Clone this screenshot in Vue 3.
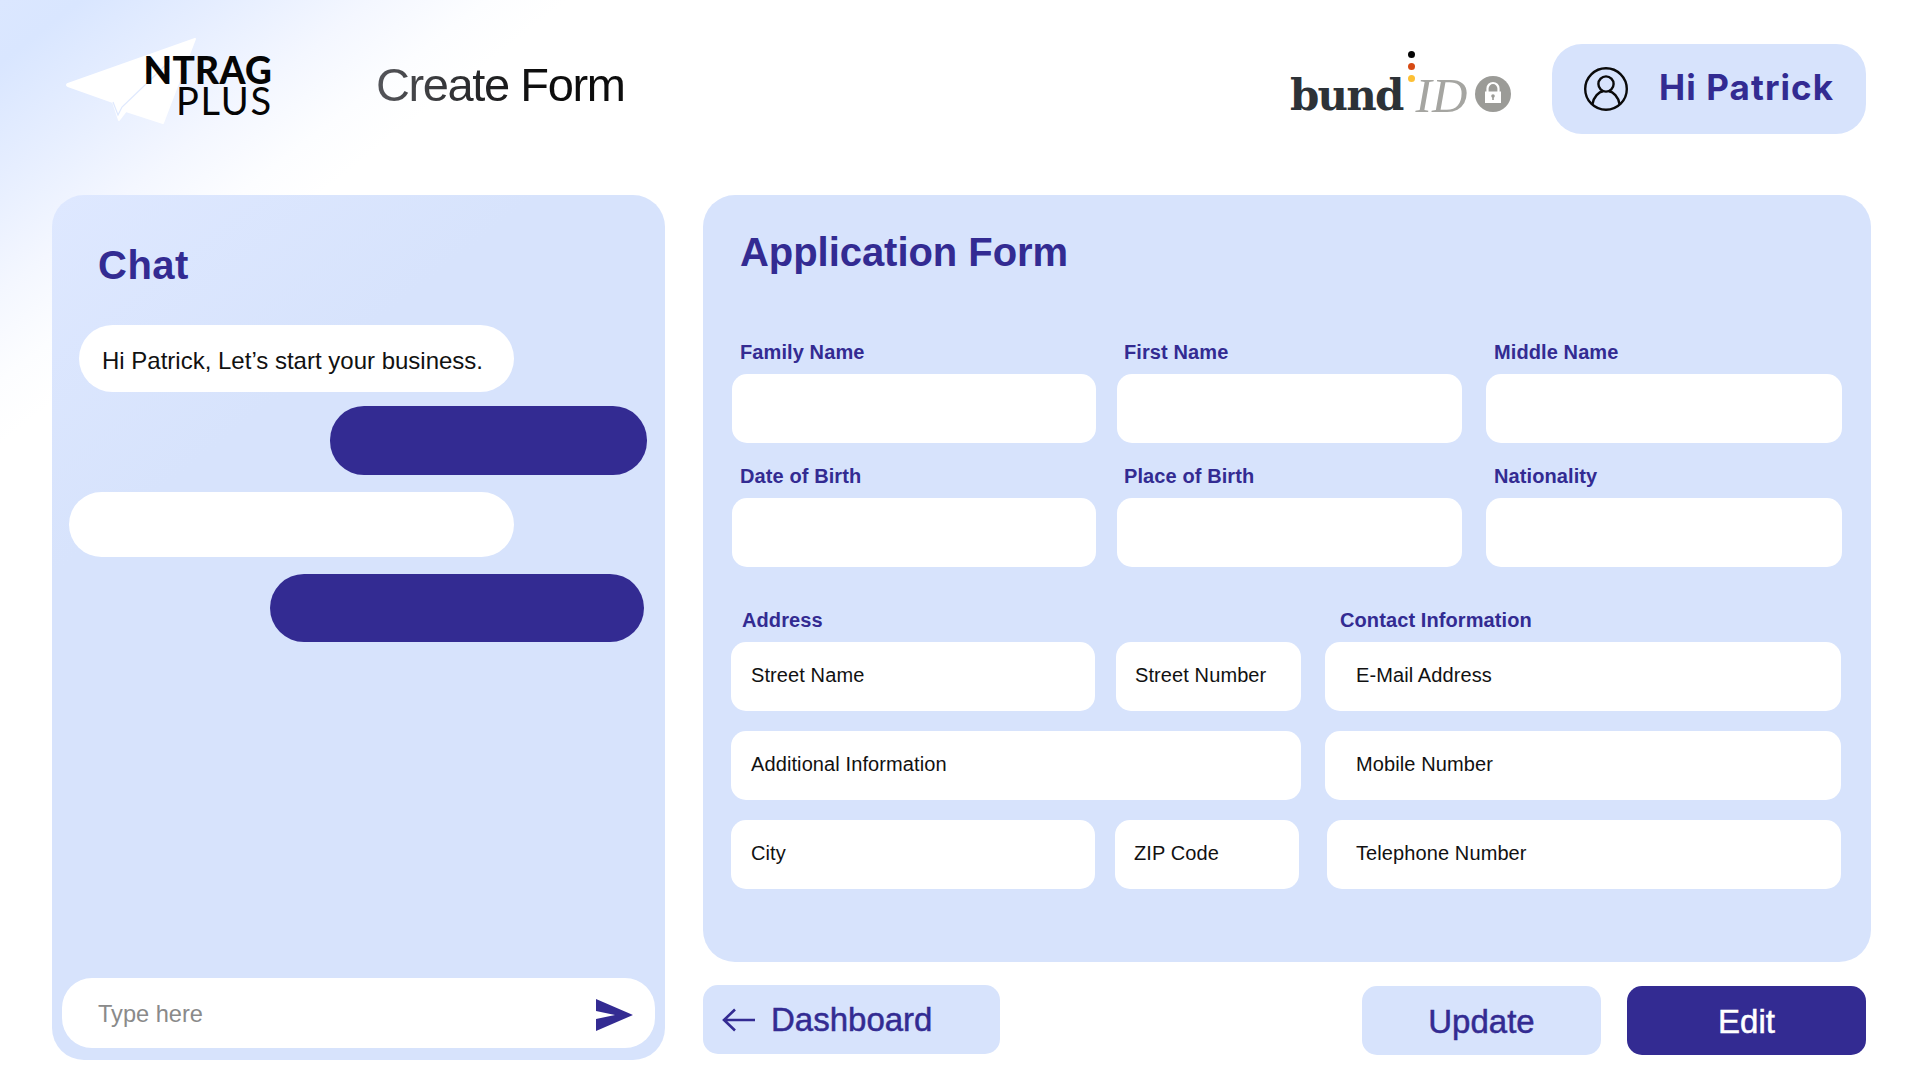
<script setup>
const topRows = [
  [
    { label: 'Family Name', col: 'col-a' },
    { label: 'First Name', col: 'col-b' },
    { label: 'Middle Name', col: 'col-c' }
  ],
  [
    { label: 'Date of Birth', col: 'col-a' },
    { label: 'Place of Birth', col: 'col-b' },
    { label: 'Nationality', col: 'col-c' }
  ]
]
</script>

<template>
  <div class="page">
    <header class="header">
      <div class="logo">
        <svg class="plane" width="140" height="90" viewBox="0 0 140 90" aria-hidden="true">
          <path d="M129 4 L2 49 Q0 50 2 51 L47 67 L53 85 L60 76 L97 88 Z" fill="#fff" stroke="#fff" stroke-width="2" stroke-linejoin="round"/>
          <path d="M47 67 L52 80 L56 72 L104 26" fill="none" stroke="#dfe9fe" stroke-width="1.2"/>
        </svg>
        <div class="logo-text">
          <span class="logo-top">NTRAG</span>
          <span class="logo-bottom">PLUS</span>
        </div>
      </div>
      <h1 class="page-title">Create Form</h1>
      <div class="bund">
        <span class="bund-word">bund</span>
        <span class="dots"><i class="dot black"></i><i class="dot red"></i><i class="dot gold"></i></span>
        <span class="bund-id">ID</span>
        <svg class="lock" width="36" height="36" viewBox="0 0 36 36" aria-hidden="true">
          <circle cx="18" cy="18" r="18" fill="#9b9b97"/>
          <path d="M12.5 16v-3.5a5.5 5.5 0 0 1 11 0V16" fill="none" stroke="#fff" stroke-width="2.2"/>
          <path d="M10 15.5h16V27H10z" fill="#fff"/>
          <circle cx="18" cy="20" r="1.8" fill="#9b9b97"/>
          <path d="M17.2 20h1.6v4h-1.6z" fill="#9b9b97"/>
        </svg>
      </div>
      <div class="user-pill">
        <svg width="44" height="44" viewBox="0 0 44 44" fill="none" stroke="#0a0a0a" stroke-width="2.4" aria-hidden="true">
          <circle cx="22" cy="22" r="20.8"/>
          <circle cx="22" cy="17" r="7.6"/>
          <path d="M8.5 37c1-7 6.5-12.4 10.5-12.8M35.5 37c-1-7-6.5-12.4-10.5-12.8"/>
        </svg>
        <span class="user-name">Hi Patrick</span>
      </div>
    </header>

    <main class="content">
      <section class="chat">
        <h2 class="chat-title">Chat</h2>
        <div class="bubble b1">Hi Patrick, Let’s start your business.</div>
        <div class="bubble b2"></div>
        <div class="bubble b3"></div>
        <div class="bubble b4"></div>
        <div class="chat-input">
          <span class="placeholder">Type here</span>
          <svg class="send" width="38" height="32" viewBox="0 0 38 32" aria-hidden="true">
            <path d="M0 0 L37 16 L0 32 L0 20 L19 16 L0 12 Z" fill="#332b92"/>
          </svg>
        </div>
      </section>

      <div class="right">
        <section class="form-panel">
          <h2 class="form-title">Application Form</h2>
          <div v-for="(row, i) in topRows" :key="i" class="top-row">
            <div v-for="f in row" :key="f.label" class="top-field" :class="f.col">
              <label class="label">{{ f.label }}</label>
              <div class="field"></div>
            </div>
          </div>
          <div class="lower">
            <div class="address">
              <div class="label addr-label">Address</div>
              <div class="row">
                <div class="field text w-main">Street Name</div>
                <div class="field text w-num">Street Number</div>
              </div>
              <div class="row">
                <div class="field text w-full">Additional Information</div>
              </div>
              <div class="row">
                <div class="field text w-main">City</div>
                <div class="field text w-zip">ZIP Code</div>
              </div>
            </div>
            <div class="contact">
              <div class="label contact-label">Contact Information</div>
              <div class="row"><div class="field text c-field">E-Mail Address</div></div>
              <div class="row"><div class="field text c-field">Mobile Number</div></div>
              <div class="row"><div class="field text c-field c-last">Telephone Number</div></div>
            </div>
          </div>
        </section>

        <div class="actions">
          <button class="btn dash">
            <svg width="34" height="24" viewBox="0 0 34 24" fill="none" stroke="#332b92" stroke-width="2.6" aria-hidden="true">
              <path d="M33 12H2M13 1.5 2 12l11 10.5"/>
            </svg>
            <span>Dashboard</span>
          </button>
          <button class="btn update">Update</button>
          <button class="btn edit">Edit</button>
        </div>
      </div>
    </main>
  </div>
</template>

<style>
html, body { margin: 0; background: #fff; }
</style>

<style scoped>
.page {
  width: 1920px;
  height: 1080px;
  overflow: hidden;
  box-sizing: border-box;
  background: linear-gradient(142deg, #dbe7ff 0, #d9e6ff 50px, #e6eeff 140px, #f4f7ff 230px, #fcfdff 300px, #ffffff 350px);
  font-family: "Liberation Sans", Arial, sans-serif;
  color: #111;
}
.header {
  height: 195px;
  display: flex;
  align-items: flex-start;
  box-sizing: border-box;
  padding-left: 66px;
}
.logo {
  display: grid;
  width: 206px;
  height: 90px;
  margin-top: 35px;
}
.plane, .logo-text { grid-area: 1 / 1; }
.logo-text {
  display: flex;
  flex-direction: column;
  align-items: flex-end;
  margin-top: 20px;
  color: #050505;
  line-height: 30px;
}
.logo-top { font-family: Lato, sans-serif; font-weight: 900; font-size: 37px; letter-spacing: 0.3px; }
.logo-bottom { font-family: Lato, sans-serif; font-weight: 400; font-size: 38px; letter-spacing: 1.8px; margin-right: -1px; }
.page-title {
  margin: 57px 0 0 104px;
  font-size: 47px;
  line-height: 56px;
  font-weight: 400;
  letter-spacing: -1.4px;
  background: linear-gradient(90deg, #55565b, #0d0d0d 62%);
  -webkit-background-clip: text;
  background-clip: text;
  color: transparent;
  width: 260px;
  white-space: nowrap;
}
.bund {
  display: flex;
  align-items: flex-start;
  margin-left: 654px;
  width: 262px;
  margin-top: 51px;
}
.bund-word {
  font-family: "DejaVu Serif", serif;
  font-weight: 700;
  font-size: 42px;
  letter-spacing: -1.8px;
  line-height: 48px;
  color: #2d3237;
  margin-top: 21px;
}
.dots {
  display: flex;
  flex-direction: column;
  gap: 5px;
  margin-left: 5px;
}
.dot { display: block; width: 7px; height: 7px; border-radius: 50%; }
.dot.black { background: #050505; }
.dot.red { background: #d64a14; }
.dot.gold { background: #fdc035; }
.bund-id {
  font-family: "Liberation Serif", serif;
  font-style: italic;
  font-size: 49px;
  line-height: 48px;
  color: #a5a5a1;
  margin: 21px 0 0 1px;
}
.lock { margin: 25px 0 0 8px; }
.user-pill {
  margin-top: 44px;
  width: 314px;
  height: 90px;
  box-sizing: border-box;
  padding: 0 0 4px 32px;
  border-radius: 30px;
  background: #d7e3fc;
  display: flex;
  align-items: center;
  gap: 31px;
}
.user-pill svg { margin-top: 4px; }
.user-name {
  font-family: Inter, sans-serif;
  font-weight: 700;
  font-size: 35px;
  letter-spacing: 1.1px;
  color: #332b92;
  white-space: nowrap;
}
.content {
  display: flex;
  align-items: flex-start;
  padding-left: 52px;
  gap: 38px;
}
.chat {
  width: 613px;
  height: 865px;
  box-sizing: border-box;
  background: linear-gradient(142deg, #deE8ff 0, #d7e3fc 300px);
  border-radius: 32px;
  padding-bottom: 12px;
  display: flex;
  flex-direction: column;
}
.chat-title {
  margin: 41px 0 0 46px;
  font-size: 40px;
  line-height: 58px;
  font-weight: 700;
  letter-spacing: 0.5px;
  color: #332b92;
}
.bubble { border-radius: 34px; box-sizing: border-box; }
.b1 {
  margin: 31px 0 0 27px;
  width: 435px;
  height: 67px;
  background: #fff;
  padding: 0 0 0 23px;
  font-size: 24px;
  line-height: 72px;
  color: #111;
  white-space: nowrap;
}
.b2 { margin: 14px 0 0 278px; width: 317px; height: 69px; background: #332b92; }
.b3 { margin: 17px 0 0 17px; width: 445px; height: 65px; background: #fff; }
.b4 { margin: 17px 0 0 218px; width: 374px; height: 68px; background: #332b92; }
.chat-input {
  margin: auto 0 0 10px;
  width: 593px;
  height: 70px;
  box-sizing: border-box;
  background: #fff;
  border-radius: 30px;
  display: flex;
  align-items: center;
  justify-content: space-between;
  padding: 0 21px 0 36px;
}
.placeholder { font-size: 23.6px; color: #8a8a8a; margin-top: 2px; }
.send { margin-top: 4px; }
.right { width: 1168px; }
.form-panel {
  height: 767px;
  box-sizing: border-box;
  background: #d7e3fc;
  border-radius: 32px;
  padding: 33px 0 0 29px;
}
.form-title {
  margin: 0 0 64px 8px;
  font-size: 40px;
  line-height: 48px;
  font-weight: 700;
  color: #332b92;
  letter-spacing: -0.05px;
}
.top-row { display: flex; }
.top-row + .top-row { margin-top: 21px; }
.col-a { width: 364px; }
.col-b { width: 345px; margin-left: 21px; }
.col-b .label { padding-left: 7px; }
.col-c { width: 356px; margin-left: 24px; }
.label {
  display: block;
  font-size: 20px;
  line-height: 24px;
  font-weight: 700;
  color: #332b92;
  padding-left: 8px;
  margin-bottom: 10px;
  letter-spacing: 0.1px;
}
.field {
  height: 69px;
  border-radius: 15px;
  background: #fff;
  box-sizing: border-box;
}
.text {
  display: flex;
  align-items: center;
  padding: 0 0 3px 20px;
  font-size: 20px;
  letter-spacing: 0.1px;
  color: #111;
  white-space: nowrap;
}
.lower { display: flex; margin: 41px 0 0 -1px; gap: 24px; }
.address { width: 570px; }
.contact { width: 516px; }
.addr-label { padding-left: 11px; }
.contact-label { padding-left: 15px; }
.row { display: flex; margin-bottom: 20px; }
.w-main { width: 364px; }
.w-num { width: 185px; margin-left: 21px; padding-left: 19px; }
.w-zip { width: 184px; margin-left: 20px; padding-left: 19px; }
.w-full { width: 570px; }
.c-field { width: 516px; padding-left: 31px; }
.c-last { width: 514px; margin-left: 2px; padding-left: 29px; }
.actions {
  display: flex;
  align-items: flex-start;
  margin-top: 23px;
}
.btn {
  border: 0;
  font-family: "Liberation Sans", Arial, sans-serif;
  font-size: 33px;
  height: 69px;
  border-radius: 15px;
  padding: 0;
  -webkit-text-stroke: 0.5px currentColor;
}
.dash {
  width: 297px;
  background: #d7e3fc;
  color: #332b92;
  display: flex;
  align-items: center;
  gap: 15px;
  padding-left: 19px;
}
.update {
  width: 239px;
  background: #d7e3fc;
  color: #332b92;
  margin: 1px 0 0 362px;
  padding-top: 2px;
}
.edit {
  width: 239px;
  background: #332b92;
  color: #fff;
  margin: 1px 0 0 26px;
  padding-top: 2px;
}
</style>
